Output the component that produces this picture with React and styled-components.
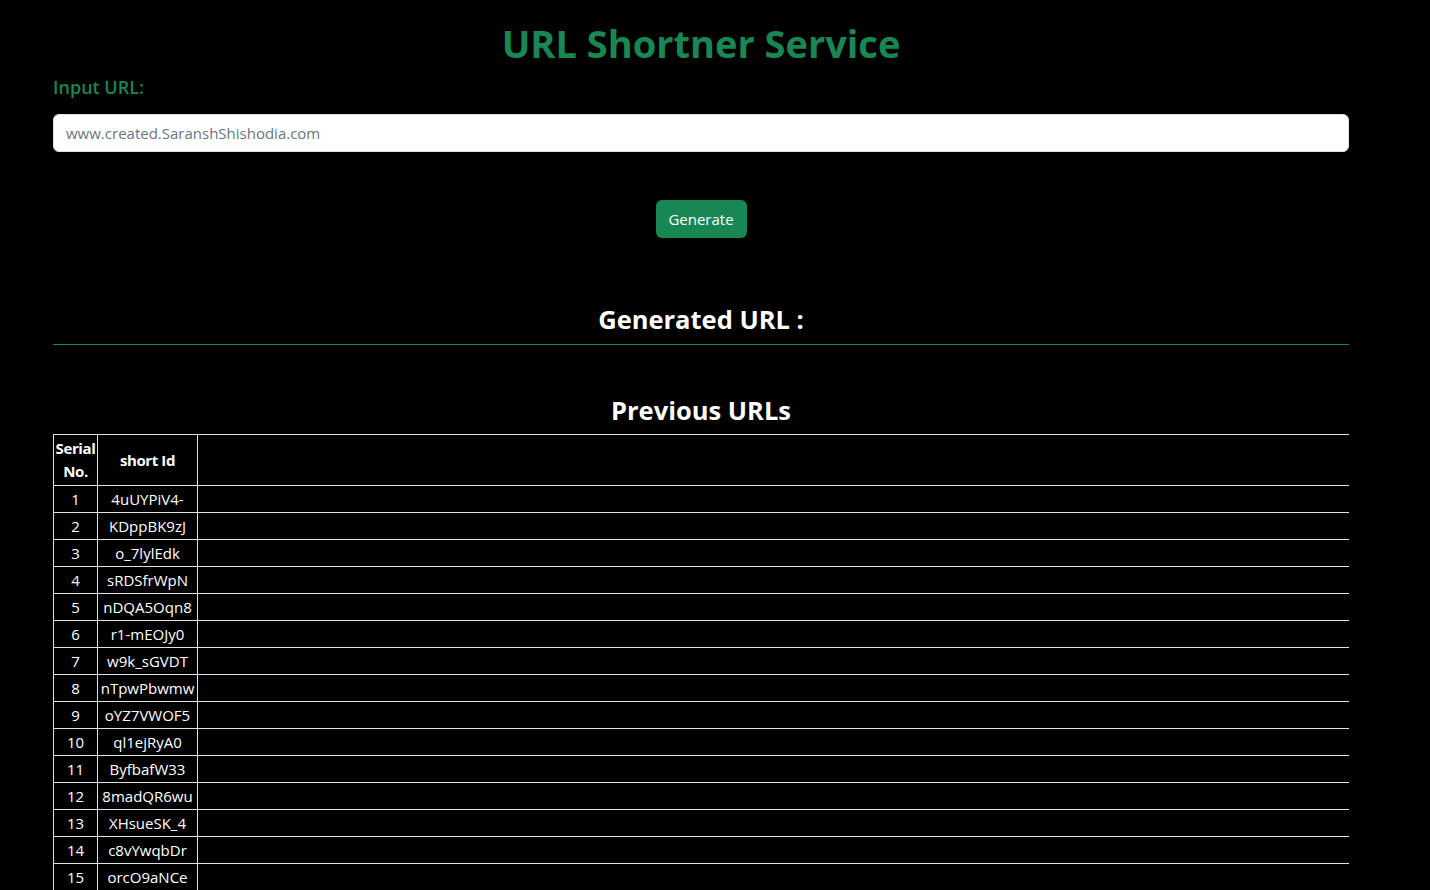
import React from "react";
import styled, { createGlobalStyle } from "styled-components";

const GlobalStyle = createGlobalStyle`
  html {
    scrollbar-width: none;
  }
  html::-webkit-scrollbar {
    display: none;
  }
  body {
    margin: 0;
    background: #000;
    color: #fff;
    font-family: "Open Sans", "Noto Sans", sans-serif;
  }
`;

const urls = [
  "4uUYPiV4-",
  "KDppBK9zJ",
  "o_7lylEdk",
  "sRDSfrWpN",
  "nDQA5Oqn8",
  "r1-mEOJy0",
  "w9k_sGVDT",
  "nTpwPbwmw",
  "oYZ7VWOF5",
  "ql1ejRyA0",
  "ByfbafW33",
  "8madQR6wu",
  "XHsueSK_4",
  "c8vYwqbDr",
  "orcO9aNCe",
];

function App() {
  return (
    <>
      <GlobalStyle />
      <Container>
        <Title>URL Shortner Service</Title>
        <Label htmlFor="url">Input URL:</Label>
        <UrlInput id="url" placeholder="www.created.SaranshShishodia.com" />
        <ButtonRow>
          <GenerateButton>Generate</GenerateButton>
        </ButtonRow>
        <SectionTitle>Generated URL :</SectionTitle>
        <Divider />
        <SectionTitle $top={47}>Previous URLs</SectionTitle>
        <Table>
          <colgroup>
            <col style={{ width: 44 }} />
            <col style={{ width: 100 }} />
            <col />
          </colgroup>
          <thead>
            <tr>
              <Th>Serial No.</Th>
              <Th>short Id</Th>
              <Th />
            </tr>
          </thead>
          <tbody>
            {urls.map((id, i) => (
              <tr key={id}>
                <Td>{i + 1}</Td>
                <Td>{id}</Td>
                <Td />
              </tr>
            ))}
          </tbody>
        </Table>
      </Container>
    </>
  );
}

export default App;

const Container = styled.div`
  width: 1296px;
  margin-left: 53px;
  padding-top: 20px;
`;

const Title = styled.h1`
  margin: 0;
  text-align: center;
  color: #198754;
  font-size: 38px;
  font-weight: 700;
  line-height: 47px;
`;

const Label = styled.label`
  display: block;
  margin-top: 5px;
  color: #198754;
  font-size: 18px;
  font-weight: 600;
  line-height: 30px;
`;

const UrlInput = styled.input`
  display: block;
  box-sizing: border-box;
  width: 100%;
  height: 38px;
  margin-top: 12px;
  padding: 0 12px;
  border: 1px solid #dee2e6;
  border-radius: 6px;
  background: #fff;
  font-family: "Open Sans", sans-serif;
  font-size: 15px;
  outline: none;

  &::placeholder {
    color: #6c757d;
  }
`;

const ButtonRow = styled.div`
  display: flex;
  justify-content: center;
  margin-top: 48px;
`;

const GenerateButton = styled.button`
  width: 91px;
  height: 38px;
  border: none;
  border-radius: 6px;
  background: #198754;
  color: #fff;
  font-family: "Open Sans", sans-serif;
  font-size: 15px;
  cursor: pointer;
`;

const SectionTitle = styled.h3`
  margin: ${(p) => p.$top || 63}px 0 0;
  text-align: center;
  font-size: 25.5px;
  font-weight: 700;
  line-height: 36px;
`;

const Divider = styled.hr`
  margin: 7px 0 0;
  border: none;
  border-top: 1px solid #198754;
`;

const Table = styled.table`
  width: 100%;
  margin-top: 6px;
  table-layout: fixed;
  border-collapse: collapse;
  border-top: 1px solid #dee2e6;
`;

const Th = styled.th`
  padding: 2px 0;
  border-left: 1px solid #dee2e6;
  border-bottom: 1px solid #dee2e6;
  font-size: 15px;
  font-weight: 700;
  line-height: 23px;
  text-align: center;
  letter-spacing: -0.4px;
`;

const Td = styled.td`
  height: 26px;
  padding: 0;
  border-left: 1px solid #dee2e6;
  border-bottom: 1px solid #dee2e6;
  font-size: 15px;
  line-height: 26px;
  text-align: center;
  letter-spacing: 0;
  white-space: nowrap;
`;
